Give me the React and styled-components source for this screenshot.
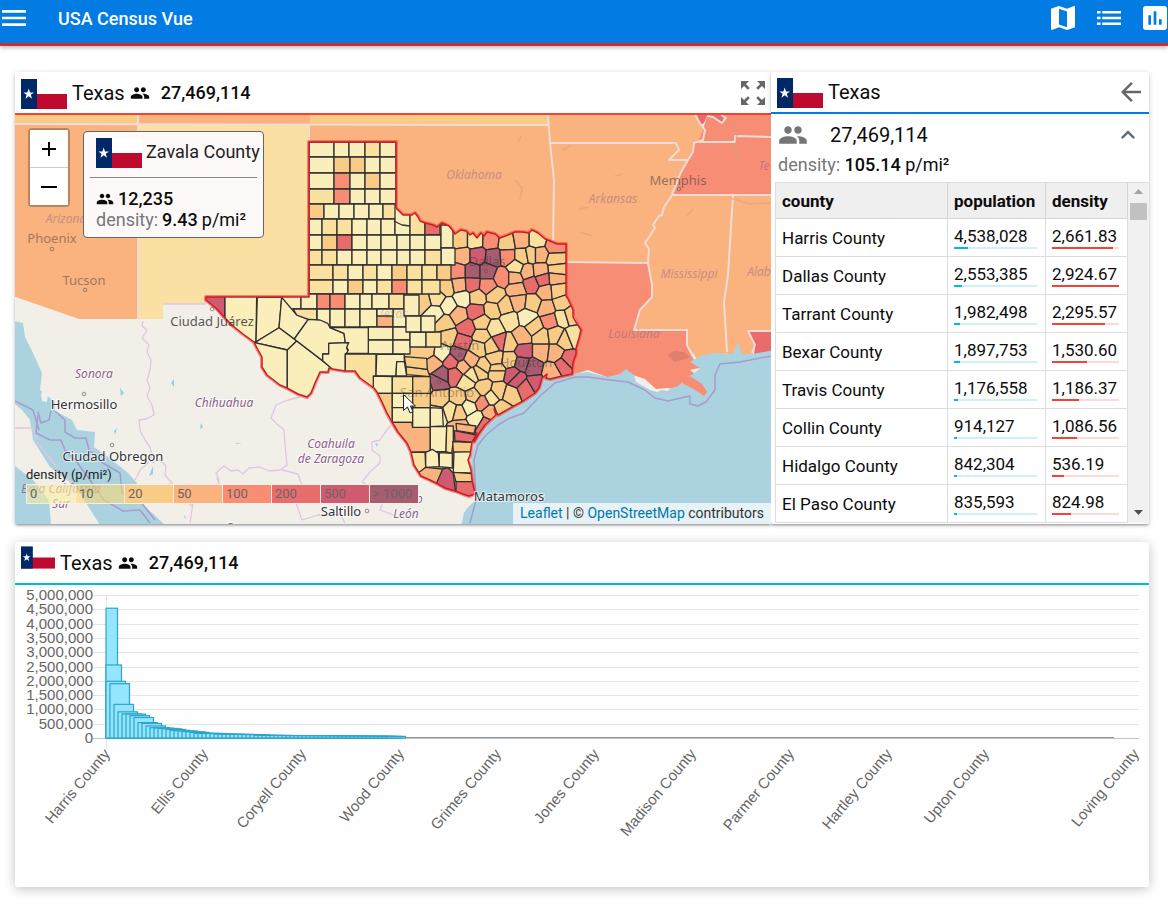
import React from 'react';
import styled, { createGlobalStyle } from 'styled-components';
import {
  MdMenu, MdMap, MdAssessment, MdGroup, MdZoomOutMap, MdArrowBack, MdKeyboardArrowUp,
} from 'react-icons/md';

const Global = createGlobalStyle`
  *, *::before, *::after { box-sizing: border-box; }
  body { margin: 0; background: #fff; color: #0c0c0c; font-family: Roboto, "Liberation Sans", sans-serif; }
  button { font: inherit; padding: 0; border: 0; background: none; cursor: pointer; }
`;

/* ---------- app shell ---------- */
const TopBar = styled.header`
  display: flex; align-items: center; height: 46px; padding: 0 1px 8px 2px; overflow: hidden;
  background: #027be3; border-bottom: 3px solid #c6302f; color: #fff;
`;
const BarShadow = styled.div`box-shadow: 0 2px 4px rgba(0,0,0,.25);`;
const Title = styled.h1`margin: 0 auto 0 32px; padding-top: 2px; font-size: 18px; line-height: 24px; font-weight: 500;`;
const BarActions = styled.nav`display: flex; gap: 22px;`;
const IconButton = styled.button`
  display: grid; place-content: center; width: 24px; height: 24px; color: ${(p) => p.$color || 'inherit'};
  svg { display: block; }
`;
const Page = styled.main`display: flex; flex-direction: column; gap: 18px; padding: 26px 19px 24px 15px;`;
const TopRow = styled.div`display: grid; grid-template-columns: 2fr 1fr; align-items: stretch;`;
const Card = styled.section`
  display: flex; flex-direction: column; min-width: 0; background: #fff; border-radius: 2px;
  box-shadow: 0 1px 5px rgba(0,0,0,.2), 0 2px 2px rgba(0,0,0,.14), 0 3px 1px -2px rgba(0,0,0,.12);
`;
const ChartCard = styled(Card)`
  background: #fefefe; 
  box-shadow: 0 2px 12px rgba(0,0,0,.24);
`;
const CardHeader = styled.div`
  display: flex; align-items: center; height: ${(p) => p.$height || 43}px; padding: 0 6px;
  border-bottom: 2px solid ${(p) => p.$accent};
`;
const Name = styled.h2`margin: 0 5px; font-size: 20px; line-height: 28px; font-weight: 400;`;
const Total = styled.strong`margin-left: 11px; font-size: 18px; line-height: 28px; font-weight: 500;`;
const Strong = styled.b`font-weight: 500;`;
const Spacer = styled.span`flex: 1;`;
const FlagSvg = styled.svg`display: block; flex: none; align-self: ${(p) => (p.$top ? 'flex-start' : 'center')}; margin-top: ${(p) => (p.$top ? 4 : 2)}px;`;

/* ---------- map ---------- */
const MapArea = styled.div`position: relative; height: 409px; overflow: hidden; background: #f2efe9;`;
const MapSvg = styled.svg`display: block; width: 100%; height: 100%;`;
const ZoomBox = styled.div`
  position: absolute; left: 13px; top: 13px; display: flex; flex-direction: column;
  border: 2px solid rgba(0,0,0,.25); border-radius: 4px; background-clip: padding-box;
`;
const ZoomButton = styled.button`
  display: grid; place-content: center; width: 38px; height: 37px; background: #fff; color: #000;
  &:first-child { height: 38px; border-bottom: 1px solid #ccc; }
`;
const Popup = styled.div`
  position: absolute; left: 68px; top: 16px; width: 181px; height: 107px; padding: 6px;
  background: #fdf9f8; border: 1px solid #666; border-radius: 4px; font-size: 18px; line-height: 21px;
`;
const PopupHead = styled.div`
  display: flex; align-items: flex-start; gap: 4px; height: 40px; padding-left: 6px; border-bottom: 1px solid #888;
  svg { margin-top: 0; align-self: flex-start; }
  span { white-space: nowrap; line-height: 28px; color: #222; }
`;
const PopupRow = styled.div`display: flex; align-items: center; gap: 4px; padding-left: 6px; margin-top: ${(p) => p.$gap || 0}px;`;
const Muted = styled.span`color: #777;`;
const Legend = styled.div`position: absolute; left: 11px; top: 351px; font-size: 13px; line-height: 18px; color: #222;`;
const LegendCells = styled.div`display: flex; height: 20px; border-left: 1px solid #f4eee4;`;
const LegendCell = styled.span`
  width: 49px; padding-left: 3px; line-height: 18px; color: #666; background: ${(p) => p.$color};
  border: solid #f4eee4; border-width: 1px 1px 1px 0;
`;
const Attribution = styled.div`
  position: absolute; right: 0; bottom: 0; height: 21px; padding: 0 7px;
  background: rgba(255,255,255,.7); font-size: 14px; line-height: 21px; color: #333;
  a { color: #0078a8; text-decoration: none; }
`;

/* ---------- county list ---------- */
const Stats = styled.div`padding: 6px 9px 0 7px; height: 68px;`;
const StatLine = styled.div`display: flex; align-items: center; height: 29px; font-size: 20px;`;
const StatValue = styled.span`margin-left: 22px;`;
const DensityLine = styled.div`height: 32px; font-size: 18px; line-height: 32px;`;
const ListArea = styled.div`display: flex; height: 341px; margin-left: 4px; overflow: hidden; border-left: 1px solid #ddd; border-top: 1px solid #ddd;`;
const TableView = styled.div`flex: 1; min-width: 0; overflow: hidden;`;
const Table = styled.table`width: 100%; table-layout: fixed; border-collapse: separate; border-spacing: 0; font-size: 17px;`;
const Th = styled.th`
  width: ${(p) => p.$width || 'auto'}; height: 36px; padding: 0 6px; text-align: left; font-size: 17px;
  background: #efefef; border: solid #d6d6d6; border-width: 0 1px 1px 0;
`;
const Td = styled.td`height: 38px; padding: 0 6px; border: solid #ddd; border-width: 0 1px 1px 0; line-height: 22px;`;
const Track = styled.div`height: 2px; margin: 0 2px 1px 0; background: ${(p) => p.$bg};`;
const Fill = styled.div`height: 2px; min-width: 2px; background: ${(p) => p.$fg};`;
const ScrollRail = styled.div`
  display: flex; flex-direction: column; align-items: center; width: 21px; padding: 6px 2px 8px;
  background: #f1f1f1;
`;
const Thumb = styled.span`width: 17px; height: 17px; margin-top: 9px; margin-bottom: auto; background: #c1c1c1;`;
const RailArrow = styled.svg`display: block; flex: none;`;
const ChartSvg = styled.svg`display: block; width: 100%; height: auto; font-family: "Liberation Sans", Arial, sans-serif;`;

const DENSITY_COLORS = ['#faeebb', '#fae1a0', '#f8cb87', '#fab27f', '#f98d74', '#e86c6c', '#d05b70', '#a85c70'];
const LEGEND = [
  ['0', 'rgba(252,237,160,.6)'], ['10', 'rgba(250,217,118,.6)'], ['20', '#f8cb87'], ['50', '#fab27f'],
  ['100', '#f98d74'], ['200', '#e86c6c'], ['500', '#d05b70'], ['> 1000', '#a85c70'],
];

function Flag({ width = 46, height = 30, top = false }) {
  return (
    <FlagSvg $top={top} width={width} height={height} viewBox="0 0 46 30" aria-label="Flag of Texas">
      <rect width="46" height="15" fill="#fff" />
      <rect y="15" width="46" height="15" fill="#bf0a30" />
      <rect width="16" height="30" fill="#002868" />
      <polygon fill="#fff" points="7.7,9.6 9,13.4 13,13.4 9.8,15.8 11,19.7 7.7,17.3 4.4,19.7 5.6,15.8 2.4,13.4 6.4,13.4" />
    </FlagSvg>
  );
}

function ListIcon() {
  return (
    <svg width="24" height="14" viewBox="0 0 24 14" fill="currentColor">
      <path d="M0 0h3.600v2.600H0zM5.200 0H24v2.600H5.200zM0 5.700h3.600v2.600H0zM5.200 5.700H24v2.600H5.200zM0 11.400h3.600V14H0zM5.200 11.400H24V14H5.200z" />
    </svg>
  );
}

/* ---------- county shapes ---------- */
const TEXAS = '309,142 396,142 396,208 403,215 412,215 415,213 418,217 420,221 425,223 433,225 437,227 442,223 449,226 453,231 455,234 461,230 466,231 470,235 473,233 477,238 481,233 484,236 487,232 495,234 500,238 508,235 515,232 522,232 529,233 532,230 538,233 545,239 550,241 557,244 566,244 566,296 568,299 573,310 573,317 577,324 581,330 579,338 576,348 576,354 573,362 572,374 558,377 550,379 546,378 547,374 542,378 539,388 535,393 523,401 512,407 498,415 494,409 496,415 485,425 480,432 474,442 477,433 472,442 470,455 468,460 471,470 472,480 475,494 469,496 463,494 455,491 445,488 438,484 430,480 421,476 414,465 411,452 407,443 398,432 392,422 387,413 382,402 377,392 374,388 360,378 355,371 345,371 333,369 329,368 328,372 320,372 315,383 311,393 307,397 298,394 287,388 280,385 267,375 262,367 262,357 257,348 254,342 243,334 233,326 224,317 217,309 206,300 206,297 309,297';

const ROWS = [
  [142, 157, [309, 334, 349, 365, 380, 396], '00010'],
  [157, 173, [309, 334, 350, 365, 380, 396], '02200'],
  [173, 189, [309, 334, 350, 365, 380, 396], '04020'],
  [189, 204, [309, 334, 350, 365, 380, 396], '14000'],
  [204, 219, [309, 324, 339, 354, 369, 383, 396], '200001'],
  [219, 235, [309, 322, 337, 352, 367, 381, 395], '011000'],
  [205, 235, [395, 410, 425, 440], '015'],
  [235, 250, [309, 322, 337, 352, 367, 381, 397, 410, 425, 441], '025000000'],
  [225, 248, [441, 453], '0'],
  [248, 265, [441, 455], '0'],
  [250, 265, [309, 322, 337, 352, 367, 381, 397, 410, 425, 441], '110000001'],
  [265, 280, [309, 333, 348, 363, 377, 392, 407, 422, 437, 451], '110102112'],
  [280, 294, [309, 333, 348, 363, 377, 392, 407, 422, 440], '10201411'],
  [294, 309, [282, 301, 317, 330, 345, 360, 372, 389, 404], '00440001'],
  [309, 327, [317, 330, 345, 360, 377, 393, 406], '000030'],
  [309, 316, [377, 393], '0'],
  [295, 316, [404, 419], '0'],
  [327, 340, [368, 393, 410], '00'],
  [340, 354, [368, 393, 410], '00'],
  [332, 347, [410, 426], '0'],
  [332, 347, [426, 441], '1'],
  [316, 332, [406, 421, 435], '00'],
];

const z7 = (s) => s.split(' ').map((p) => { const [x, y] = p.split(','); return [200 + x / 3, 260 + y / 3]; });
const z9 = (s) => s.split(' ').map((p) => { const [x, y] = p.split(','); return [370 + x / 3, 340 + y / 3]; });
const SHAPES = [
  [6, z7('0,100 75,100 75,220 0,130')],
  [0, z7('75,100 170,100 168,245 100,260 75,172')],
  [0, z7('172,112 245,112 237,203 168,245')],
  [0, z7('245,112 290,165 325,178 283,237 237,203')],
  [0, z7('237,203 290,243 262,270 164,248')],
  [0, z7('164,248 262,270 262,400 130,350')],
  [0, z7('262,270 290,243 392,322 385,440 262,440')],
  [1, z7('280,147 350,147 350,184 325,178 290,165')],
  [0, z7('325,178 360,180 383,190 390,203 432,220 436,248 386,250 386,282 368,282 368,302 283,237')],
  [0, z7('386,250 447,248 440,265 445,275 436,282 436,350 400,330 368,302 368,282 386,282')],
  [0, z7('390,203 505,203 505,280 440,280 445,270 440,262 446,248 436,248 432,220')],
  [1, z7('436,282 528,282 528,375 520,385 480,370 436,345')],
  [0, z9('20,43 103,43 103,65 80,65 78,108 18,108')],
  [0, z9('10,108 67,110 67,160 10,160')],
  [1, z9('67,110 128,110 128,160 67,160')],
  [2, z9('0,160 67,160 67,247 0,247')],
  [0, z9('67,160 128,160 128,203 67,203')],
  [0, z9('67,203 128,203 128,247 67,247')],
  [3, z9('50,247 125,247 128,262 181,262 181,335 100,337')],
  [0, z9('128,203 181,203 181,262 128,262')],
  [2, z9('128,160 181,160 181,203 128,203')],
  [2, z9('128,110 181,110 181,160 128,160')],
  [0, z9('80,65 103,65 108,95 110,108 78,108')],
  [2, z9('108,80 172,88 180,110 110,104')],
  [2, z9('103,50 170,55 172,88 108,80')],
  [0, z9('181,203 217,205 220,258 181,260')],
  [0, z9('181,260 230,260 228,335 181,335')],
  [1, z9('230,258 250,258 250,305 245,340 228,335')],
  [1, z9('110,337 165,337 167,382 152,400 110,380')],
  [0, z9('167,337 187,328 205,340 208,380 167,382')],
  [0, z9('208,338 247,340 247,384 208,380')],
  [0, z9('252,335 330,335 330,400 250,397')],
  [3, z9('130,410 167,382 218,387 205,440')],
  [6, z9('218,387 235,383 250,400 258,470 195,440')],
  [2, z9('250,397 330,402 330,425 258,425')],
  [5, z9('258,425 340,425 340,490 258,470')],
  [2, z9('248,305 320,308 310,335 250,336')],
  [5, z9('253,272 320,285 320,308 255,303')],
  [3, z9('258,250 318,258 312,280 260,272')],
];

const SEEDS_NORTH = '240,120,2 285,120,1 332,122,4 380,128,2 425,120,3 470,120,1 525,138,4 247,168,3 293,168,6 340,172,7 382,170,4 427,170,2 455,165,2 478,165,3 527,180,2 234,215,4 278,215,7 322,215,7 367,232,4 405,232,3 442,215,3 408,202,1 480,212,3 530,207,2 527,235,3 200,262,2 238,255,3 276,253,5 322,258,4 455,252,5 488,238,5 410,268,3 497,275,3 532,272,2 170,295,1 130,305,2 247,295,0 205,318,0 165,340,0 292,292,2 345,288,2 235,345,3 288,335,5 338,330,2 375,318,2 415,305,3 458,310,2 500,325,3 545,310,2 195,370,2 260,385,5 305,368,2 345,385,1 388,362,1 442,352,0 510,362,4 547,352,1 570,345,2 305,408,2 205,410,2 248,425,5 360,425,5 388,430,2 425,410,3 463,380,2 485,410,2 525,405,2 555,420,2 580,410,1 140,455,2 185,460,0 235,465,7 295,445,2 335,440,2 272,480,3 345,475,2 430,455,6 485,455,3 525,460,3 565,480,5 215,485,5 250,500,3 160,490,3 185,525,7 225,525,5 275,525,1 310,500,2 350,510,2 390,480,2 425,490,7 460,502,7 400,525,6 515,515,3 550,495,5';
const SEEDS_SOUTH = '160,140,2 205,125,7 255,105,5 290,125,1 330,95,2 380,95,2 340,145,2 385,155,2 365,172,1 310,170,2 335,188,4 265,175,2 245,210,1 210,175,2 265,215,2 298,200,0 320,237,0 345,252,5 360,218,3 420,165,2 440,115,6 470,145,5 495,130,6 395,205,2 200,225,0 270,265,3 280,290,5';
const seedList = (text, ox, oy) => text.split(' ').map((s) => {
  const [x, y, level] = s.split(',').map(Number);
  return { x: ox + x / 3, y: oy + y / 3, level };
});
const SEEDS = [...seedList(SEEDS_NORTH, 380, 200), ...seedList(SEEDS_SOUTH, 370, 340)];

/* Keeps the part of a polygon that lies nearer to a than to b. */
function clipCell(poly, a, b) {
  const mx = (a.x + b.x) / 2; const my = (a.y + b.y) / 2;
  const side = ([x, y]) => (x - mx) * (b.x - a.x) + (y - my) * (b.y - a.y);
  const out = [];
  poly.forEach((p, i) => {
    const q = poly[(i + 1) % poly.length];
    const sp = side(p); const sq = side(q);
    if (sp <= 0) out.push(p);
    if (sp * sq < 0) {
      const t = sp / (sp - sq);
      out.push([p[0] + t * (q[0] - p[0]), p[1] + t * (q[1] - p[1])]);
    }
  });
  return out;
}
const CELLS = SEEDS.map((seed) => {
  let poly = [[seed.x - 30, seed.y - 30], [seed.x + 30, seed.y - 30], [seed.x + 30, seed.y + 30], [seed.x - 30, seed.y + 30]];
  SEEDS.forEach((other) => { if (other !== seed && poly.length) poly = clipCell(poly, seed, other); });
  return [seed.level, poly];
});
const pts = (poly) => poly.map(([x, y]) => `${x.toFixed(1)},${y.toFixed(1)}`).join(' ');

const STATES = [
  ['#f8cb87', '10,110 138,110 138,124 10,124'],
  ['#fab27f', '138,110 310,110 310,124 138,124'],
  ['#f8cb87', '310,110 548,110 548,125 310,124'],
  ['#fab27f', '10,125 138,125 138,319 79,319 10,295'],
  ['#fae1a3', '139,125 310,125 310,300 206,297 206,304 163,304 163,319 139,319'],
  ['#fab27f', '310,125 548,125 550,143 554,180 553,262 310,262'],
  ['#fab27f', '548,110 695,110 701,125 705,132 699,142 693,143 693,152 688,160 669,160 679,150 676,143 549,143'],
  ['#fab27f', '549,143 676,143 679,150 669,160 688,160 681,172 676,185 671,197 664,207 659,216 653,225 653,233 645,243 649,249 648,263 553,263 554,180'],
  ['#e86c6c', '695,110 730,110 725,115 722,123 713,117 707,116 704,123 701,125'],
  ['#f88d76', '707,116 713,117 722,123 726,118 722,110 775,110 775,136 735,136 735,142 698,142 703,130'],
  ['#f88d76', '693,142 735,142 735,137 775,137 775,195 673,195 680,174 688,160 694,148'],
  ['#fab27f', '673,195 734,195 728,275 724,302 727,353 700,363 687,345 687,330 634,330 639,310 652,297 652,285 648,272 649,249 645,243 653,233 653,225 664,207'],
  ['#fab27f', '733,195 775,195 775,331 748,331 755,345 752,356 727,354 724,302 728,275'],
  ['#e86c6c', '748,331 775,331 775,352 754,355 755,345'],
  ['#f88d76', '560,262 648,263 652,285 652,297 639,310 634,330 687,330 687,345 694,360 700,368 690,370 700,378 706,391 697,391 686,380 680,390 668,388 656,389 645,379 630,374 621,377 607,377 588,370 572,375 568,360 581,330 565,296'],
];
const BORDERS = [
  '15,124 548,125', '138,115 138,319', '309,125 309,142', '548,115 550,143 554,180 553,244',
  '549,143 676,143 679,150 669,160 688,160', '567,262 648,263',
  '695,115 701,125 705,130 703,140 694,143 693,152 688,160 681,172 676,185 671,197 664,207 662,215 659,216 653,225 655,228 645,243 649,249 648,263 652,285 652,297 640,310 634,330 687,330 687,345 693,357',
  '707,116 713,117 722,123 726,118 721,115', '699,142 735,142 735,136 771,137', '673,195 771,195', '733,195 728,275 724,302 727,352',
  '771,331 748,331 755,345 752,353',
];
const WATER = [
  '775,350 752,354 742,354 738,342 733,354 715,353 700,356 690,362 700,368 693,374 687,377 684,381 678,386 672,388 667,391 662,390 657,392 650,390 643,386 636,382 634,375 626,369 620,374 607,377 588,372 572,374 558,377 547,380 546,373 542,382 523,402 498,416 485,426 475,443 471,457 472,480 476,500 468,507 464,513 460,530 780,530',
  '15,321 23,323 25,337 33,353 42,373 40,390 55,402 55,411 72,420 77,430 95,432 94,447 108,457 127,472 137,483 135,497 165,525 100,525 76,487 50,467 33,440 30,420 22,410 15,404',
  '15,466 33,480 49,500 51,525 15,525',
];
const OFFSHORE = [
  '470,523 476,500 475,480 474,460 478,445 486,435 498,425 510,418 524,413 540,396 555,383 575,377 588,377 610,380 628,382 645,390 655,398 668,401 685,397 690,396 690,404 698,406 706,402 715,390 715,375 720,364 740,362 771,356',
  '38,415 36,433 50,440 61,440 65,450 76,461 90,480 104,500 123,511 140,510 150,523',
  '55,411 65,420 65,432 75,438 86,438 89,450 103,463 120,473 122,493 140,501 155,520',
  '15,401 33,410 39,430', '38,412 41,423 49,420 51,411',
];
const REGION_LINES = [
  '143,321 142,326 147,330 142,338 149,345 147,352 151,360 150,370 147,380 150,388 147,396 152,405 154,415 146,419 139,420 140,430 145,440 150,447 152,455 148,463 140,470 135,480', '152,463 160,460 166,466 165,475 172,483 165,486 177,492 185,500 193,507',
  '217,492 219,480 216,473 224,466 231,471 238,470 243,474 249,468 260,467 269,471 280,470 287,465 285,445 284,430 277,424 271,418 276,405 288,400 300,397',
  '391,425 384,434 380,440 372,442 372,450 380,456 380,463 370,472 362,482', '217,478 220,487 205,493 197,490 193,503 190,523', '282,470 298,474 303,488 295,500 302,520 318,515 340,514 345,523',
  '15,428 33,428 37,442 60,471 78,490', '362,482 372,488 372,495 385,497 380,510 399,517', '163,304 206,304',
];
const PLACES = [
  ['Oklahoma', 474, 179, 1, .45], ['Arkansas', 613, 203, 1, .45], ['Mississippi', 689, 278, 1, .45], ['Louisiana', 634, 338, 1, .45],
  ['Alab', 759, 276, 1, .45], ['Te', 764, 170, 1, .45], ['Arizona', 66, 223, 1, .45], ['Texas', 393, 318, 1, .3],
  ['Sonora', 94, 378, 1, 1], ['Chihuahua', 224, 407, 1, 1], ['Coahuila', 331, 448, 1, 1], ['de Zaragoza', 331, 463, 1, 1],
  ['Baja California', 61, 493, 1, .8], ['Sur', 61, 508, 1, 1], ['Nuevo', 406, 503, 1, 1], ['León', 406, 518, 1, 1], ['Durango', 250, 532, 1, 1],
  ['Phoenix', 52, 243, 0, .45], ['Tucson', 84, 285, 0, .45], ['Ciudad Juárez', 212, 326, 0, .8], ['Hermosillo', 84, 409, 0, 1],
  ['Ciudad Obregon', 113, 461, 0, 1], ['Saltillo', 341, 516, 0, 1], ['Matamoros', 509, 501, 0, 1], ['Dallas', 487, 266, 0, .45],
  ['Austin', 460, 350, 0, .4], ['Houston', 526, 367, 0, .4], ['San Antonio', 437, 397, 0, .35], ['Memphis', 678, 185, 0, .5],
];
const TOWNS = [[52, 249], [85, 290], [84, 394], [112, 445], [212, 309], [367, 511], [486, 271], [460, 355], [527, 371], [439, 382], [679, 189]];

function CensusMap() {
  const line = { fill: 'none', strokeLinejoin: 'round' };
  return (
    <MapSvg viewBox="15 115 756 409" preserveAspectRatio="xMidYMid slice" role="img" aria-label="Population density by county">
      <defs><clipPath id="texas"><polygon points={TEXAS} /></clipPath></defs>
      <rect x="0" y="100" width="800" height="440" fill="#f2efe9" />
      {STATES.map(([fill, p]) => <polygon key={p} points={p} fill={fill} />)}
      {WATER.map((p) => <polygon key={p} points={p} fill="#aad3df" />)}
      <polygon points="41,394 44,389 48,393 47,402 42,401" fill="#f2efe9" />
      <polygon points="682,378 690,376 702,384 707,392 704,396 697,391 688,386 683,384" fill="#f88d76" />
      <path d="M668 355l6-4 10 1 6 5-8 3-8 2z" fill="#dd8071" />
      {BORDERS.map((p) => <polyline key={p} points={p} {...line} stroke="#f1dbd6" strokeWidth="2" />)}
      {REGION_LINES.map((p) => <polyline key={p} points={p} {...line} stroke="#e2c5e3" strokeWidth="1.3" />)}
      {OFFSHORE.map((p) => <polyline key={p} points={p} {...line} stroke="#a79bd0" strokeWidth="1.5" />)}
      <g stroke="#d2a283" strokeWidth="1.5" fill="none" opacity=".5">
        <path d="M518 142l3-6M515 180l7 8-2 12M563 150l8-5M579 209l10-2M615 176l8-2M731 124l6 10-2 14 3 12M687 216l6-7M730 198l20 6 20-1M580 232l12 4" />
      </g>
      <g fill="#8fd0e6">
        <path d="M171 383l3-4v8zM120 388l4 5-3 3zM201 423l2 4-3 2zM114 431l3-3-2 7zM235 443h7l-5 1zM184 517l3 2-3-4zM149 476l4-10v8zM375 443l3 1-1 3z" />
      </g>
      <polygon points={TEXAS} fill="none" stroke="#ff4433" strokeWidth="4" strokeOpacity=".6" strokeLinejoin="round" />
      <g clipPath="url(#texas)" stroke="#303030" strokeWidth="1.3" strokeLinejoin="round">
        <polygon points={TEXAS} fill={DENSITY_COLORS[0]} />
        {CELLS.map(([level, p], i) => <polygon key={i} points={pts(p)} fill={DENSITY_COLORS[level]} />)}
        {ROWS.map(([y0, y1, xs, levels]) => levels.split('').map((level, i) => (
          <rect key={`${y0}-${xs[i]}`} x={xs[i]} y={y0} width={xs[i + 1] - xs[i]} height={y1 - y0} fill={DENSITY_COLORS[level]} />
        )))}
        {SHAPES.map(([level, p], i) => <polygon key={i} points={pts(p)} fill={DENSITY_COLORS[level]} />)}
        <polyline points="394,221 402,225 410,226" fill="none" />
      </g>
      <polygon points={TEXAS} fill="none" stroke="#c4202a" strokeWidth="1.5" strokeLinejoin="round" />
      {TOWNS.map(([x, y]) => <circle key={`${x},${y}`} cx={x} cy={y} r="1.8" fill="none" stroke="#555" strokeOpacity=".6" />)}
      <g textAnchor="middle" fontSize="13" fontFamily='"Noto Sans", sans-serif'>
        {PLACES.map(([name, x, y, region, opacity]) => (
          <text
            key={name} x={x} y={y} fill={region ? '#8d618b' : '#333'} opacity={opacity}
            fontStyle={region ? 'italic' : 'normal'} fontSize={region ? 12 : 13}
            stroke={opacity === 1 ? '#fff' : 'none'} strokeWidth="2" strokeOpacity=".7" paintOrder="stroke"
          >{name}</text>
        ))}
      </g>
      <path d="M403.500 394.500v16l4-3.500 2.500 6 3-1.300-2.500-5.700h5z" fill="#fff" stroke="#222" />
    </MapSvg>
  );
}

/* ---------- chart ---------- */
const POPULATION = [
  4538028, 2553385, 1982498, 1897753, 1176558, 914127, 842304, 835593, 780612, 716087, 537559, 508514, 422156,
  359715, 346312, 334941, 322225, 299453, 269721, 254308, 245671, 222936, 215037, 194739, 163632, 161077, 159990,
  159436, 151249, 136051, 131705, 130044, 129036, 126042, 125467, 123745, 118105, 115000, 112000, 93389, 92382,
  90978, 88255, 88000, 87000, 86000, 85000,
];
for (let i = POPULATION.length; i < 73; i += 1) POPULATION.push(82000 - (i - 46) * 1000);

const CHART_LABELS = [
  ['Harris', 106], ['Ellis', 204], ['Coryell', 302], ['Wood', 400], ['Grimes', 497], ['Jones', 595], ['Madison', 692],
  ['Parmer', 790], ['Hartley', 888], ['Upton', 985], ['Loving', 1135],
];

function PopulationChart() {
  const y = (v) => 738 - (v / 5000000) * 143;
  const ticks = Array.from({ length: 11 }, (_, i) => i * 500000);
  return (
    <ChartSvg viewBox="15 585 1134 302" role="img" aria-label="Population by county">
      {ticks.map((t) => <line key={t} x1="93" x2="1139" y1={Math.round(y(t)) + .5} y2={Math.round(y(t)) + .5} stroke={t ? '#e5e5e5' : '#c4c4c4'} />)}
      <line x1="106.500" x2="106.500" y1="595" y2="748" stroke="#e5e5e5" />
      <g fill="#666" fontSize="15" textAnchor="end">
        {ticks.map((t) => <text key={t} x="93" y={Math.round(y(t)) + 5}>{t.toLocaleString('en-US')}</text>)}
      </g>
      <g fill="#96e5ff" stroke="#2ba5c9" strokeWidth="1.2">
        {POPULATION.map((v, i) => {
          const left = Math.max(106, 98 + i * 4); const right = 117.5 + i * 4;
          return <rect key={i} x={left} y={y(v)} width={right - left} height={738 - y(v)} />;
        })}
      </g>
      <line x1="406" x2="1114" y1="737.500" y2="737.500" stroke="#8b9498" />
      <g fill="#666" fontSize="15" textAnchor="end">
        {CHART_LABELS.map(([name, x]) => (
          <text key={name} transform={`translate(${x + 1} 751) rotate(-50)`} y="5">{`${name} County`}</text>
        ))}
      </g>
    </ChartSvg>
  );
}

const COUNTIES = [
  ['Harris', '4,538,028', '2,661.83'], ['Dallas', '2,553,385', '2,924.67'], ['Tarrant', '1,982,498', '2,295.57'],
  ['Bexar', '1,897,753', '1,530.60'], ['Travis', '1,176,558', '1,186.37'], ['Collin', '914,127', '1,086.56'],
  ['Hidalgo', '842,304', '536.19'], ['El Paso', '835,593', '824.98'],
];
const toNumber = (s) => Number(s.replace(/,/g, ''));

function Meter({ value, max, fg, bg }) {
  return <Track $bg={bg}><Fill $fg={fg} style={{ width: `${(value / max) * 100}%` }} /></Track>;
}

function CountyTable() {
  return (
    <ListArea>
      <TableView>
        <Table>
          <thead><tr><Th>county</Th><Th $width="98px">population</Th><Th $width="82px">density</Th></tr></thead>
          <tbody>
            {COUNTIES.map(([name, population, density]) => (
              <tr key={name}>
                <Td>{name} County</Td>
                <Td>{population}<Meter value={toNumber(population)} max={27469114} fg="#00bcd4" bg="#ccf2f6" /></Td>
                <Td>{density}<Meter value={toNumber(density)} max={2924.67} fg="#f44336" bg="#fdd9d7" /></Td>
              </tr>
            ))}
          </tbody>
        </Table>
      </TableView>
      <ScrollRail aria-hidden="true">
        <RailArrow width="9" height="5"><path d="M0 5L4.500 0 9 5z" fill="#a3a3a3" /></RailArrow>
        <Thumb />
        <RailArrow width="9" height="5"><path d="M0 0L4.500 5 9 0z" fill="#505050" /></RailArrow>
      </ScrollRail>
    </ListArea>
  );
}

export default function App() {
  return (
    <>
      <Global />
      <BarShadow>
        <TopBar>
          <IconButton aria-label="Menu"><MdMenu size={32} /></IconButton>
          <Title>USA Census Vue</Title>
          <BarActions>
            <IconButton aria-label="Map"><MdMap size={32} /></IconButton>
            <IconButton aria-label="List"><ListIcon /></IconButton>
            <IconButton aria-label="Chart"><MdAssessment size={32} /></IconButton>
          </BarActions>
        </TopBar>
      </BarShadow>
      <Page>
        <TopRow>
          <Card>
            <CardHeader $accent="#f44336">
              <Flag /><Name>Texas</Name><MdGroup size={20} /><Total>27,469,114</Total><Spacer />
              <IconButton aria-label="Expand map" $color="#666"><MdZoomOutMap size={32} /></IconButton>
            </CardHeader>
            <MapArea>
              <CensusMap />
              <ZoomBox>
                <ZoomButton aria-label="Zoom in"><svg width="16" height="16"><path d="M8 1v14M1 8h14" stroke="#000" strokeWidth="2" /></svg></ZoomButton>
                <ZoomButton aria-label="Zoom out"><svg width="16" height="16"><path d="M0 8h16" stroke="#000" strokeWidth="2" /></svg></ZoomButton>
              </ZoomBox>
              <Popup>
                <PopupHead><Flag top /><span>Zavala County</span></PopupHead>
                <PopupRow $gap={10}><MdGroup size={18} /><Strong>12,235</Strong></PopupRow>
                <PopupRow><Muted>density:</Muted><Strong>9.43</Strong><span>p/mi²</span></PopupRow>
              </Popup>
              <Legend>
                density (p/mi²)
                <LegendCells>{LEGEND.map(([label, color]) => <LegendCell key={label} $color={color}>{label}</LegendCell>)}</LegendCells>
              </Legend>
              <Attribution><a href="#leaflet">Leaflet</a> | © <a href="#osm">OpenStreetMap</a> contributors</Attribution>
            </MapArea>
          </Card>
          <Card>
            <CardHeader $accent="#027be3" $height={42}>
              <Flag /><Name>Texas</Name><Spacer />
              <IconButton aria-label="Back" $color="#666"><MdArrowBack size={30} /></IconButton>
            </CardHeader>
            <Stats>
              <StatLine>
                <MdGroup size={30} color="#757575" /><StatValue>27,469,114</StatValue><Spacer />
                <IconButton aria-label="Collapse" $color="#5f6f7a"><MdKeyboardArrowUp size={28} /></IconButton>
              </StatLine>
              <DensityLine><Muted>density:</Muted> <Strong>105.14</Strong> p/mi²</DensityLine>
            </Stats>
            <CountyTable />
          </Card>
        </TopRow>
        <ChartCard>
          <CardHeader $accent="#00bcd4">
            <Flag width={34} height={23} top /><Name>Texas</Name><MdGroup size={20} /><Total>27,469,114</Total>
          </CardHeader>
          <PopulationChart />
        </ChartCard>
      </Page>
    </>
  );
}
